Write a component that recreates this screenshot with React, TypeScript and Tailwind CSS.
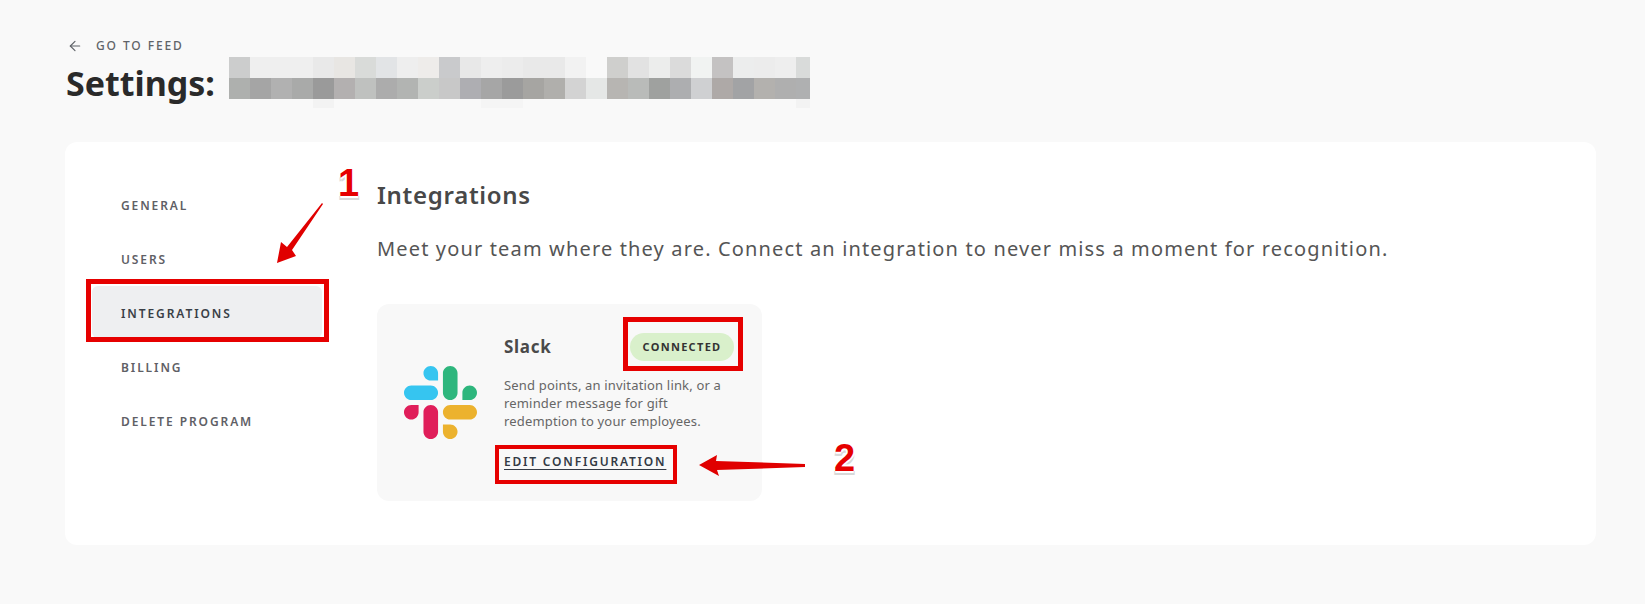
import React from "react";
import { ArrowLeft } from "lucide-react";

const NAV_ITEMS = ["General", "Users", "Integrations", "Billing", "Delete Program"];

const MOSAIC_TOP = [
  "#cccdcd", "#efefef", "#efefef", "#efefef", "#e9e9e9", "#e8e6e3", "#d9dbd9", "#e2e4e6", "#eeeeee",
  "#eeecea", "#c9cacc", "#e8e8e8", "#eeeeee", "#ececec", "#e9e9e9", "#e9e9e9", "#f2f2f2", "#f9f9f9",
  "#cfcfcd", "#e2e2e2", "#ecedec", "#dbdbdb", "#f1f3f2", "#c4c2c2", "#eceded", "#ececec", "#eeeeee", "#d9dbda",
];
const MOSAIC_BOTTOM = [
  "#aeb0ae", "#a5a5a5", "#b1b1b1", "#a9aaa9", "#9a9a9a", "#b3b0b0", "#bfc1bf", "#acacac", "#b2b4b2",
  "#cbcecb", "#c8c8c8", "#aeaeb2", "#a6a6a6", "#9b9b9b", "#a6a5a2", "#b0afac", "#d3d3d3", "#e5e7e6",
  "#b7b5b2", "#b9bbb9", "#9fa19f", "#adaeb0", "#cfd0d2", "#aea9a7", "#a2a3a5", "#b3b1ae", "#afafaf", "#afb0b1",
];
// the faint strip under the blur, only a few blocks show
const MOSAIC_FAINT = [
  "", "", "", "", "#f3f3f3", "", "", "", "", "", "", "", "#f5f5f5", "#f5f5f5", "", "", "", "",
  "", "", "", "", "", "", "", "", "", "#f3f3f3",
];

function SlackLogo() {
  return (
    <svg viewBox="0 0 2447.6 2452.5" className="w-[73px] h-[75px] shrink-0">
      <path
        d="M897.4 0c-135.3.1-244.8 109.9-244.7 245.2-.1 135.3 109.5 245.1 244.8 245.2h244.8V245.3c.1-135.3-109.5-245.1-244.9-245.3.1 0 .1 0 0 0m0 654H244.8C109.5 654.1-.1 763.9 0 899.2c-.2 135.3 109.4 245.1 244.7 245.3h652.7c135.3-.1 244.9-109.9 244.8-245.2.1-135.4-109.5-245.2-244.8-245.3z"
        fill="#36c5f0"
      />
      <path
        d="M2447.6 899.2c.1-135.3-109.5-245.1-244.8-245.2-135.3.1-244.9 109.9-244.8 245.2v245.3h244.8c135.3-.1 244.9-109.9 244.8-245.3zm-652.7 0V245.2C1795 110 1685.5.2 1550.2 0c-135.3.1-244.9 109.9-244.8 245.2v654c-.2 135.3 109.4 245.1 244.7 245.3 135.3-.1 244.9-109.9 244.8-245.3z"
        fill="#2eb67d"
      />
      <path
        d="M1550.1 2452.5c135.3-.1 244.9-109.9 244.8-245.2.1-135.3-109.5-245.1-244.8-245.2h-244.8v245.2c-.1 135.2 109.5 245 244.8 245.2zm0-654.1h652.7c135.3-.1 244.9-109.9 244.8-245.2.2-135.3-109.4-245.1-244.7-245.3h-652.7c-135.3.1-244.9 109.9-244.8 245.2-.1 135.4 109.4 245.2 244.7 245.3z"
        fill="#ecb22e"
      />
      <path
        d="M0 1553.2c-.1 135.3 109.5 245.1 244.8 245.2 135.3-.1 244.9-109.9 244.8-245.2v-245.2H244.8c-135.3.1-244.9 109.9-244.8 245.2zm652.7 0v654c-.2 135.3 109.4 245.1 244.7 245.3 135.3-.1 244.9-109.9 244.8-245.2v-653.9c.2-135.3-109.4-245.1-244.7-245.3-135.4 0-244.9 109.8-244.8 245.1z"
        fill="#e01e5a"
      />
    </svg>
  );
}

function Mosaic() {
  return (
    <div className="w-[584px] h-[51px] overflow-hidden ml-[11px] mt-[-1px] pl-[3px]">
      {[MOSAIC_TOP, MOSAIC_BOTTOM].map((row, i) => (
        <div key={i} className="flex h-[21px]">
          {row.map((color, j) => (
            <div key={j} className="w-[21px] h-full shrink-0" style={{ background: color }} />
          ))}
        </div>
      ))}
      <div className="flex h-[9px]">
        {MOSAIC_FAINT.map((color, j) => (
          <div key={j} className="w-[21px] h-full shrink-0" style={{ background: color || "transparent" }} />
        ))}
      </div>
    </div>
  );
}

function Annotations() {
  const numeral =
    "absolute font-['Liberation_Sans',sans-serif] font-bold text-[#e60000] leading-none [text-shadow:-2px_0_0_#fff,2px_0_0_#fff,0_-2px_0_#fff,0_2px_0_#fff,-1px_4px_0_#d8d8d8,1px_4px_0_#d8d8d8]";
  return (
    <div className="absolute inset-0 pointer-events-none">
      <div className="absolute left-[86px] top-[279px] w-[243px] h-[63px] border-[5px] border-[#e60000]" />
      <div className="absolute left-[623px] top-[317px] w-[120px] h-[54px] border-[5px] border-[#e60000]" />
      <div className="absolute left-[495px] top-[445px] w-[182px] h-[39px] border-[4px] border-[#e60000]" />
      <svg className="absolute left-0 top-0" width="1645" height="604">
        <polygon points="322,203 323,204 292,250 296,256 277,263 281,242 287,247" fill="#e00000" />
        <polygon points="805,464 805,467 717,470 719,476 699,465 717,455 716,461" fill="#e00000" />
      </svg>
      <span className={`${numeral} left-[338px] top-[164px] text-[38px]`}>1</span>
      <span className={`${numeral} left-[834px] top-[439px] text-[38px]`}>2</span>
    </div>
  );
}

export default function App() {
  return (
    <div className="relative w-[1645px] h-[604px] overflow-hidden bg-[#f9f9f9] px-[65px] pt-[37px] font-['Noto_Sans',sans-serif]">
      <a className="flex items-center h-[18px] text-[#5f6368] text-[12px] font-medium tracking-[1.9px] uppercase">
        <ArrowLeft className="w-[16px] h-[16px] ml-[2px] mr-[13px]" strokeWidth={1.75} />
        Go to feed
      </a>
      <div className="flex items-start mt-[3px] h-[84px]">
        <h1 className="text-[34px] leading-[50px] ml-[1px] font-bold text-[#2a2a2a]">Settings:</h1>
        <Mosaic />
      </div>

      <div className="flex w-[1531px] h-[403px] bg-white rounded-[12px] pl-[27px] pt-[36px]">
        <nav className="flex flex-col gap-[2px] w-[230px] shrink-0">
          {NAV_ITEMS.map((item) => (
            <div
              key={item}
              className={`flex items-center h-[52px] px-[29px] pt-[3px] rounded-[6px] text-[12px] font-semibold tracking-[1.9px] uppercase ${
                item === "Integrations" ? "bg-[#eeeff1] text-[#3a3f47]" : "text-[#5f5f66]"
              }`}
            >
              {item}
            </div>
          ))}
        </nav>

        <main className="ml-[55px]">
          <h2 className="text-[24px] leading-[34px] font-semibold tracking-[0.7px] text-[#484848]">Integrations</h2>
          <p className="mt-[22px] text-[20px] leading-[30px] tracking-[1.15px] text-[#555555]">
            Meet your team where they are. Connect an integration to never miss a moment for recognition.
          </p>

          <div className="flex items-center w-[385px] h-[197px] mt-[40px] pl-[27px] bg-[#f8f8f8] rounded-[12px]">
            <SlackLogo />
            <div className="ml-[27px] w-[230px]">
              <div className="flex items-center justify-between">
                <span className="text-[17px] font-bold tracking-[0.7px] text-[#4a4a4a]">Slack</span>
                <span className="flex items-center justify-center w-[104px] h-[28px] rounded-full bg-[#d9f0cb] text-[11px] font-bold tracking-[1.3px] text-[#333]">
                  CONNECTED
                </span>
              </div>
              <p className="mt-[15px] text-[13px] leading-[18px] tracking-[0.17px] text-[#666666]">
                Send points, an invitation link, or a reminder message for gift redemption to your employees.
              </p>
              <a className="inline-block mt-[23px] text-[12px] leading-[18px] font-semibold tracking-[1.8px] underline underline-offset-[3px] text-[#333a45]">
                EDIT CONFIGURATION
              </a>
            </div>
          </div>
        </main>
      </div>

      <Annotations />
    </div>
  );
}
